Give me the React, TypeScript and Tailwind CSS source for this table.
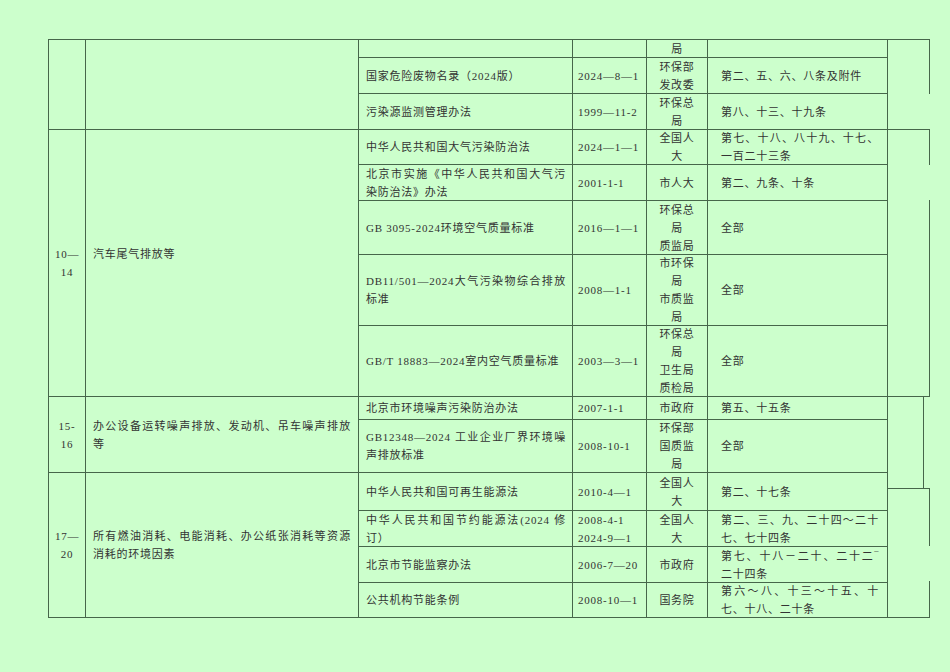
import React from "react";

type Row = {
  title: string[];
  date: string[];
  org: string[];
  art: string[];
};

const rows: Row[] = [
  { title: [], date: [], org: ["局"], art: [] },
  { title: ["国家危险废物名录（2024版）"], date: ["2024—8—1"], org: ["环保部", "发改委"], art: ["第二、五、六、八条及附件"] },
  { title: ["污染源监测管理办法"], date: ["1999—11-2"], org: ["环保总", "局"], art: ["第八、十三、十九条"] },
  { title: ["中华人民共和国大气污染防治法"], date: ["2024—1—1"], org: ["全国人", "大"], art: ["第七、十八、八十九、十七、", "一百二十三条"] },
  { title: ["北京市实施《中华人民共和国大气污", "染防治法》办法"], date: ["2001-1-1"], org: ["市人大"], art: ["第二、九条、十条"] },
  { title: ["GB 3095-2024环境空气质量标准"], date: ["2016—1—1"], org: ["环保总", "局", "质监局"], art: ["全部"] },
  { title: ["DB11/501—2024大气污染物综合排放", "标准"], date: ["2008—1-1"], org: ["市环保", "局", "市质监", "局"], art: ["全部"] },
  { title: ["GB/T 18883—2024室内空气质量标准"], date: ["2003—3—1"], org: ["环保总", "局", "卫生局", "质检局"], art: ["全部"] },
  { title: ["北京市环境噪声污染防治办法"], date: ["2007-1-1"], org: ["市政府"], art: ["第五、十五条"] },
  { title: ["GB12348—2024 工业企业厂界环境噪", "声排放标准"], date: ["2008-10-1"], org: ["环保部", "国质监", "局"], art: ["全部"] },
  { title: ["中华人民共和国可再生能源法"], date: ["2010-4—1"], org: ["全国人", "大"], art: ["第二、十七条"] },
  { title: ["中华人民共和国节约能源法(2024 修", "订）"], date: ["2008-4-1", "2024-9—1"], org: ["全国人", "大"], art: ["第二、三、九、二十四～二十", "七、七十四条"] },
  { title: ["北京市节能监察办法"], date: ["2006-7—20"], org: ["市政府"], art: ["第七、十八－二十、二十二‾", "二十四条"] },
  { title: ["公共机构节能条例"], date: ["2008-10—1"], org: ["国务院"], art: ["第六～八、十三～十五、十", "七、十八、二十条"] },
];

// row-start classes written out in full so Tailwind picks them up
const rowStart = [
  "row-start-1",
  "row-start-2",
  "row-start-3",
  "row-start-4",
  "row-start-5",
  "row-start-6",
  "row-start-7",
  "row-start-8",
  "row-start-9",
  "row-start-10",
  "row-start-11",
  "row-start-12",
  "row-start-13",
  "row-start-14",
];

const groups = [
  { span: "row-[1/4]", no: [], text: [], extra: "" },
  { span: "row-[4/9]", no: ["10—", "14"], text: ["汽车尾气排放等"], extra: "pb-[18px]" },
  { span: "row-[9/11]", no: ["15-", "16"], text: ["办公设备运转噪声排放、发动机、吊车噪声排放", "等"], extra: "" },
  { span: "row-[11/15]", no: ["17—", "20"], text: ["所有燃油消耗、电能消耗、办公纸张消耗等资源", "消耗的环境因素"], extra: "" },
];

const cell = "border-r border-b border-[#46664a] flex items-center overflow-visible";

const Lines = ({ lines }: { lines: string[] }) => (
  <div className="w-full">
    {lines.map((l, i) => (
      <span
        key={i}
        className={
          i < lines.length - 1
            ? "block whitespace-nowrap text-justify [text-align-last:justify]"
            : "block whitespace-nowrap"
        }
      >
        {l}
      </span>
    ))}
  </div>
);

export default function App() {
  return (
    <div className="min-h-screen w-full bg-[#ccffcc] pl-[48px] pt-[39px] font-['Liberation_Serif','Noto_Sans_CJK_SC',serif] text-[11px] leading-[18px] tracking-[0.75px] text-[#333]">
      <div className="grid w-[882px] grid-cols-[37px_273px_214px_74px_61px_180px_42px] grid-rows-[18px_36px_36px_35px_36px_54px_71px_71px_23px_53px_38px_36px_36px_35px] border-l border-t border-[#46664a]">
        {groups.map((g, i) => (
          <React.Fragment key={i}>
            <div className={`${cell} col-start-1 ${g.span} justify-center text-center`}>
              <div>
                {g.no.map((n, j) => (
                  <span key={j} className="block">
                    {n}
                  </span>
                ))}
              </div>
            </div>
            <div className={`${cell} col-start-2 ${g.span} pl-[7px] pr-[7px] ${g.extra}`}>
              <Lines lines={g.text} />
            </div>
          </React.Fragment>
        ))}

        {rows.map((r, i) => (
          <React.Fragment key={i}>
            <div className={`${cell} col-start-3 ${rowStart[i]} pl-[7px] pr-[6px]`}>
              <Lines lines={r.title} />
            </div>
            <div className={`${cell} col-start-4 ${rowStart[i]} pl-[5px]`}>
              <Lines lines={r.date} />
            </div>
            <div className={`${cell} col-start-5 ${rowStart[i]} justify-center text-center`}>
              <div>
                {r.org.map((o, j) => (
                  <span key={j} className="block whitespace-nowrap">
                    {o}
                  </span>
                ))}
              </div>
            </div>
            <div className={`${cell} col-start-6 ${rowStart[i]} pl-[13px] pr-[8px]`}>
              <Lines lines={r.art} />
            </div>
          </React.Fragment>
        ))}

        {/* loose right-hand column with broken borders */}
        <div className="col-start-7 row-[1/-1] flex flex-col">
          <div className="h-[54px] border-r border-[#46664a]" />
          <div className="h-[36px] border-b border-[#46664a]" />
          <div className="h-[35px] border-r border-[#46664a]" />
          <div className="h-[35px]" />
          <div className="h-[197px] border-r border-b border-[#46664a]" />
          <div className="flex h-[92px] border-b border-[#46664a]">
            <div className="w-[36px] border-r border-[#46664a]" />
          </div>
          <div className="h-[57px] border-r border-[#46664a]" />
          <div className="h-[35px]" />
          <div className="h-[37px] border-r border-b border-[#46664a]" />
        </div>
      </div>
    </div>
  );
}
